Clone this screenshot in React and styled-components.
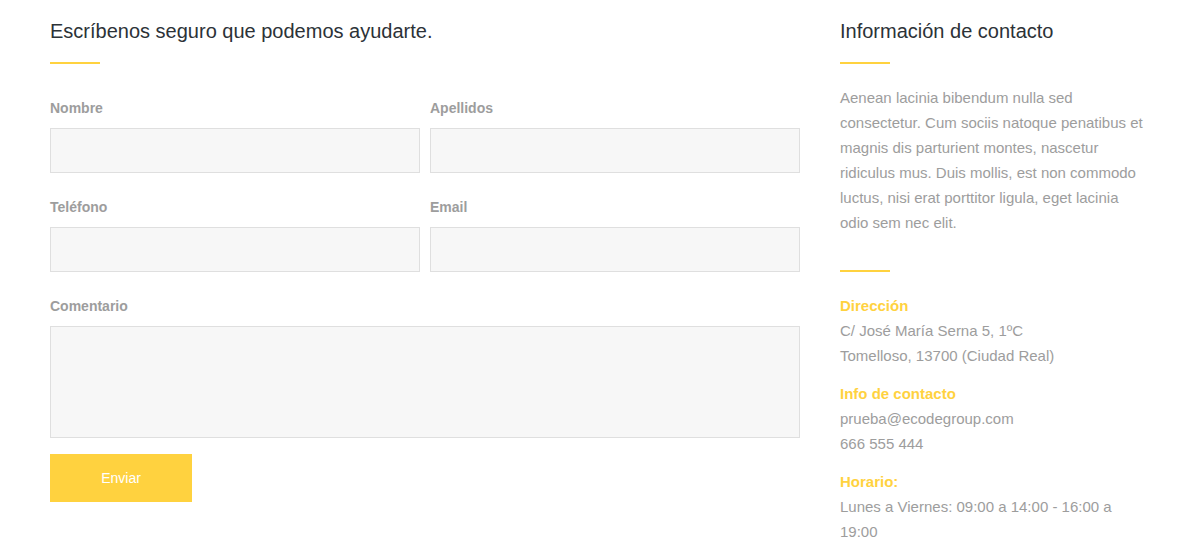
import React from 'react'
import styled, { createGlobalStyle } from 'styled-components'

const GlobalStyle = createGlobalStyle`
  body {
    margin: 0;
    background: #fff;
    font-family: "Liberation Sans", Arial, Helvetica, sans-serif;
  }
  * { box-sizing: border-box; }
`

const Page = styled.div`
  display: grid;
  grid-template-columns: 750px 310px;
  column-gap: 40px;
  padding: 19px 50px 0;
`

const Column = styled.section`
  display: flex;
  flex-direction: column;
`

const Heading = styled.h2`
  margin: 0;
  font-size: 20px;
  line-height: 24px;
  font-weight: 400;
  color: #2c3237;
`

const Divider = styled.div`
  width: 50px;
  height: 2px;
  background: #ffd23f;
  margin-top: ${props => props.top || 19}px;
`

const Form = styled.form`
  display: grid;
  grid-template-columns: 1fr 1fr;
  column-gap: 10px;
  row-gap: 24px;
  margin-top: 34px;
`

const Field = styled.label`
  display: flex;
  flex-direction: column;
  gap: 10px;
  grid-column: ${props => (props.wide ? '1 / -1' : 'auto')};
`

const Label = styled.span`
  font-size: 14px;
  line-height: 20px;
  font-weight: 700;
  color: #9d9d9d;
`

const Input = styled.input`
  height: 45px;
  width: 100%;
  background: #f7f7f7;
  border: 1px solid #dfdfdf;
  border-radius: 0;
  outline: none;
  padding: 0 12px;
  font: inherit;
`

const TextArea = styled.textarea`
  height: 112px;
  width: 100%;
  background: #f7f7f7;
  border: 1px solid #dfdfdf;
  border-radius: 0;
  outline: none;
  resize: none;
  padding: 10px 12px;
  font: inherit;
  display: block;
`

const Button = styled.button`
  width: 142px;
  height: 48px;
  margin-top: 16px;
  background: #ffd23f;
  color: #fff;
  border: none;
  border-radius: 0;
  font-family: inherit;
  font-size: 14px;
  cursor: pointer;
`

const Text = styled.p`
  margin: ${props => props.top || 0}px 0 0;
  font-size: 15px;
  line-height: 25px;
  color: #9d9d9d;
`

const InfoTitle = styled.h4`
  margin: ${props => props.top}px 0 0;
  font-size: 15px;
  line-height: 25px;
  font-weight: 700;
  color: #ffd23f;
`

const info = [
  { title: 'Dirección', lines: ['C/ José María Serna 5, 1ºC', 'Tomelloso, 13700 (Ciudad Real)'] },
  { title: 'Info de contacto', lines: ['prueba@ecodegroup.com', '666 555 444'] },
  { title: 'Horario:', lines: ['Lunes a Viernes: 09:00 a 14:00 - 16:00 a 19:00'] }
]

export default function App() {
  return (
    <>
      <GlobalStyle />
      <Page>
        <Column>
          <Heading>Escríbenos seguro que podemos ayudarte.</Heading>
          <Divider />
          <Form onSubmit={e => e.preventDefault()}>
            <Field>
              <Label>Nombre</Label>
              <Input type="text" />
            </Field>
            <Field>
              <Label>Apellidos</Label>
              <Input type="text" />
            </Field>
            <Field>
              <Label>Teléfono</Label>
              <Input type="tel" />
            </Field>
            <Field>
              <Label>Email</Label>
              <Input type="email" />
            </Field>
            <Field wide>
              <Label>Comentario</Label>
              <TextArea />
            </Field>
          </Form>
          <div>
            <Button type="button">Enviar</Button>
          </div>
        </Column>
        <Column>
          <Heading>Información de contacto</Heading>
          <Divider />
          <Text top={21}>
            Aenean lacinia bibendum nulla sed consectetur. Cum sociis natoque penatibus et magnis dis parturient
            montes, nascetur ridiculus mus. Duis mollis, est non commodo luctus, nisi erat porttitor ligula, eget
            lacinia odio sem nec elit.
          </Text>
          <Divider top={35} />
          {info.map((block, i) => (
            <div key={block.title}>
              <InfoTitle top={i === 0 ? 21 : 13}>{block.title}</InfoTitle>
              {block.lines.map(line => (
                <Text key={line}>{line}</Text>
              ))}
            </div>
          ))}
        </Column>
      </Page>
    </>
  )
}
